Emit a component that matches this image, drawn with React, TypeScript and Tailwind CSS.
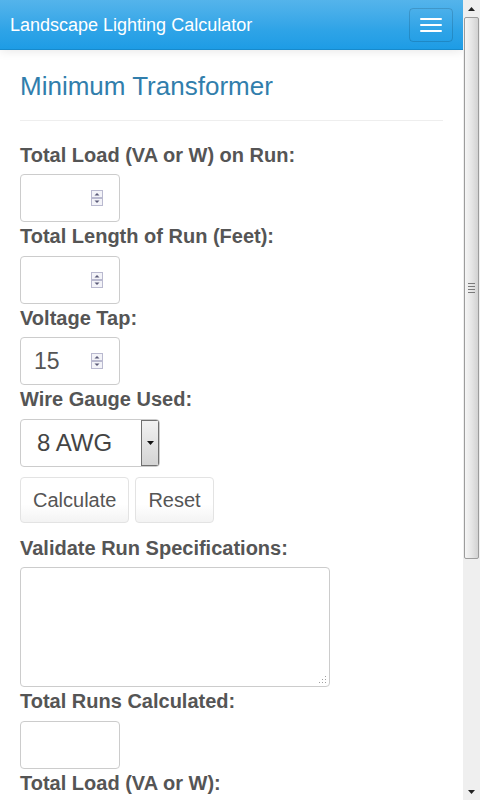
import React from "react";

function Spinner() {
  return (
    <svg width="12" height="16" viewBox="0 0 12 16" className="shrink-0">
      <rect x="0.5" y="0.5" width="11" height="7" fill="#f3f3f8" stroke="#b9b9cf" />
      <rect x="0.5" y="8.5" width="11" height="7" fill="#f3f3f8" stroke="#b9b9cf" />
      <path d="M3.5 5.5 L6 3 L8.5 5.5 Z" fill="#5a5a78" />
      <path d="M3.5 10.5 L6 13 L8.5 10.5 Z" fill="#5a5a78" />
    </svg>
  );
}

function NumberInput({ value }: { value?: string }) {
  return (
    <div className="flex h-[48px] w-[100px] items-center justify-between rounded-[4px] border border-[#cccccc] bg-white pl-[13px] pr-[16px]">
      <span className="text-[23px] leading-none text-[#555555]">{value ?? ""}</span>
      <Spinner />
    </div>
  );
}

function Label({ children }: { children: React.ReactNode }) {
  return <div className="mb-[5px] text-[20px] font-bold leading-[28.57px] text-[#555555]">{children}</div>;
}

function Scrollbar() {
  return (
    <div className="flex h-[800px] w-[17px] shrink-0 flex-col bg-[#efefef]">
      <div className="flex h-[17px] items-center justify-center">
        <svg width="7" height="4" viewBox="0 0 7 4">
          <path d="M0 4 L3.5 0 L7 4 Z" fill="#222" />
        </svg>
      </div>
      <div className="mx-[1px] flex h-[542px] items-center justify-center rounded-[2px] border border-[#9c9c9c] bg-linear-to-r from-[#f5f5f5] via-[#e6e6e6] to-[#d2d2d2]">
        <div className="flex flex-col gap-[2px]">
          <div className="h-[1px] w-[7px] bg-[#7a7a7a]" />
          <div className="h-[1px] w-[7px] bg-[#7a7a7a]" />
          <div className="h-[1px] w-[7px] bg-[#7a7a7a]" />
          <div className="h-[1px] w-[7px] bg-[#7a7a7a]" />
        </div>
      </div>
      <div className="flex-1" />
      <div className="flex h-[17px] items-center justify-center">
        <svg width="7" height="4" viewBox="0 0 7 4">
          <path d="M0 0 L3.5 4 L7 0 Z" fill="#222" />
        </svg>
      </div>
    </div>
  );
}

export default function App() {
  return (
    <div className="flex h-[800px] w-[480px] overflow-hidden bg-white font-['Liberation_Sans',Arial,sans-serif]">
      <div className="h-[800px] min-w-0 flex-1 overflow-hidden">
        <div className="relative z-10 flex h-[50px] items-center justify-between border-b border-[#178acc] bg-linear-to-b from-[#54b4eb] via-[#2fa4e7] via-60% to-[#1d9ce5] pl-[10px] pr-[10px] shadow-[0_1px_10px_rgba(0,0,0,0.1)]">
          <span className="text-[18px] leading-[20px] text-white">Landscape Lighting Calculator</span>
          <div className="flex h-[34px] w-[44px] flex-col items-center justify-center gap-[4px] rounded-[4px] border border-[rgba(0,0,0,0.14)]">
            <div className="h-[2px] w-[22px] rounded-[1px] bg-white" />
            <div className="h-[2px] w-[22px] rounded-[1px] bg-white" />
            <div className="h-[2px] w-[22px] rounded-[1px] bg-white" />
          </div>
        </div>
        <div className="px-[20px]">
          <h3 className="mt-[22px] text-[26px] font-normal leading-[28.6px] text-[#317eac]">Minimum Transformer</h3>
          <hr className="mb-[20px] mt-[19px] border-0 border-t border-[#eeeeee]" />

          <Label>Total Load (VA or W) on Run:</Label>
          <NumberInput />
          <Label>Total Length of Run (Feet):</Label>
          <NumberInput />
          <Label>Voltage Tap:</Label>
          <NumberInput value="15" />
          <Label>Wire Gauge Used:</Label>
          <div className="flex h-[48px] w-[140px] items-stretch overflow-hidden rounded-[4px] border border-[#cccccc] bg-white">
            <div className="flex flex-1 items-center pl-[16px] text-[24px] text-[#444444]">8 AWG</div>
            <div className="flex w-[18px] items-center justify-center border border-[#707070] bg-linear-to-b from-[#f2f2f2] to-[#d4d4d4]">
              <svg width="7" height="4" viewBox="0 0 7 4">
                <path d="M0 0 L3.5 4 L7 0 Z" fill="#111" />
              </svg>
            </div>
          </div>

          <div className="mb-[11px] mt-[10px] flex gap-[6px]">
            <div className="flex h-[46px] items-center rounded-[4px] border border-[#e3e3e3] bg-linear-to-b from-white via-white via-60% to-[#f3f3f3] px-[12px] pt-[1px] text-[20px] text-[#555555]">
              Calculate
            </div>
            <div className="flex h-[46px] items-center rounded-[4px] border border-[#e3e3e3] bg-linear-to-b from-white via-white via-60% to-[#f3f3f3] px-[12px] pt-[1px] text-[20px] text-[#555555]">
              Reset
            </div>
          </div>

          <Label>Validate Run Specifications:</Label>
          <div className="relative h-[120px] w-[310px] rounded-[4px] border border-[#cccccc] bg-white">
            <svg width="8" height="8" viewBox="0 0 8 8" className="absolute bottom-[2px] right-[2px]">
              <rect x="6" y="0" width="1" height="1" fill="#a0a0a0" />
              <rect x="6" y="3" width="1" height="1" fill="#a0a0a0" />
              <rect x="6" y="6" width="1" height="1" fill="#a0a0a0" />
              <rect x="3" y="3" width="1" height="1" fill="#a0a0a0" />
              <rect x="3" y="6" width="1" height="1" fill="#a0a0a0" />
              <rect x="0" y="6" width="1" height="1" fill="#a0a0a0" />
            </svg>
          </div>
          <Label>Total Runs Calculated:</Label>
          <div className="h-[48px] w-[100px] rounded-[4px] border border-[#cccccc] bg-white" />
          <Label>Total Load (VA or W):</Label>
          <div className="h-[48px] w-[100px] rounded-[4px] border border-[#cccccc] bg-white" />
        </div>
      </div>
      <Scrollbar />
    </div>
  );
}
